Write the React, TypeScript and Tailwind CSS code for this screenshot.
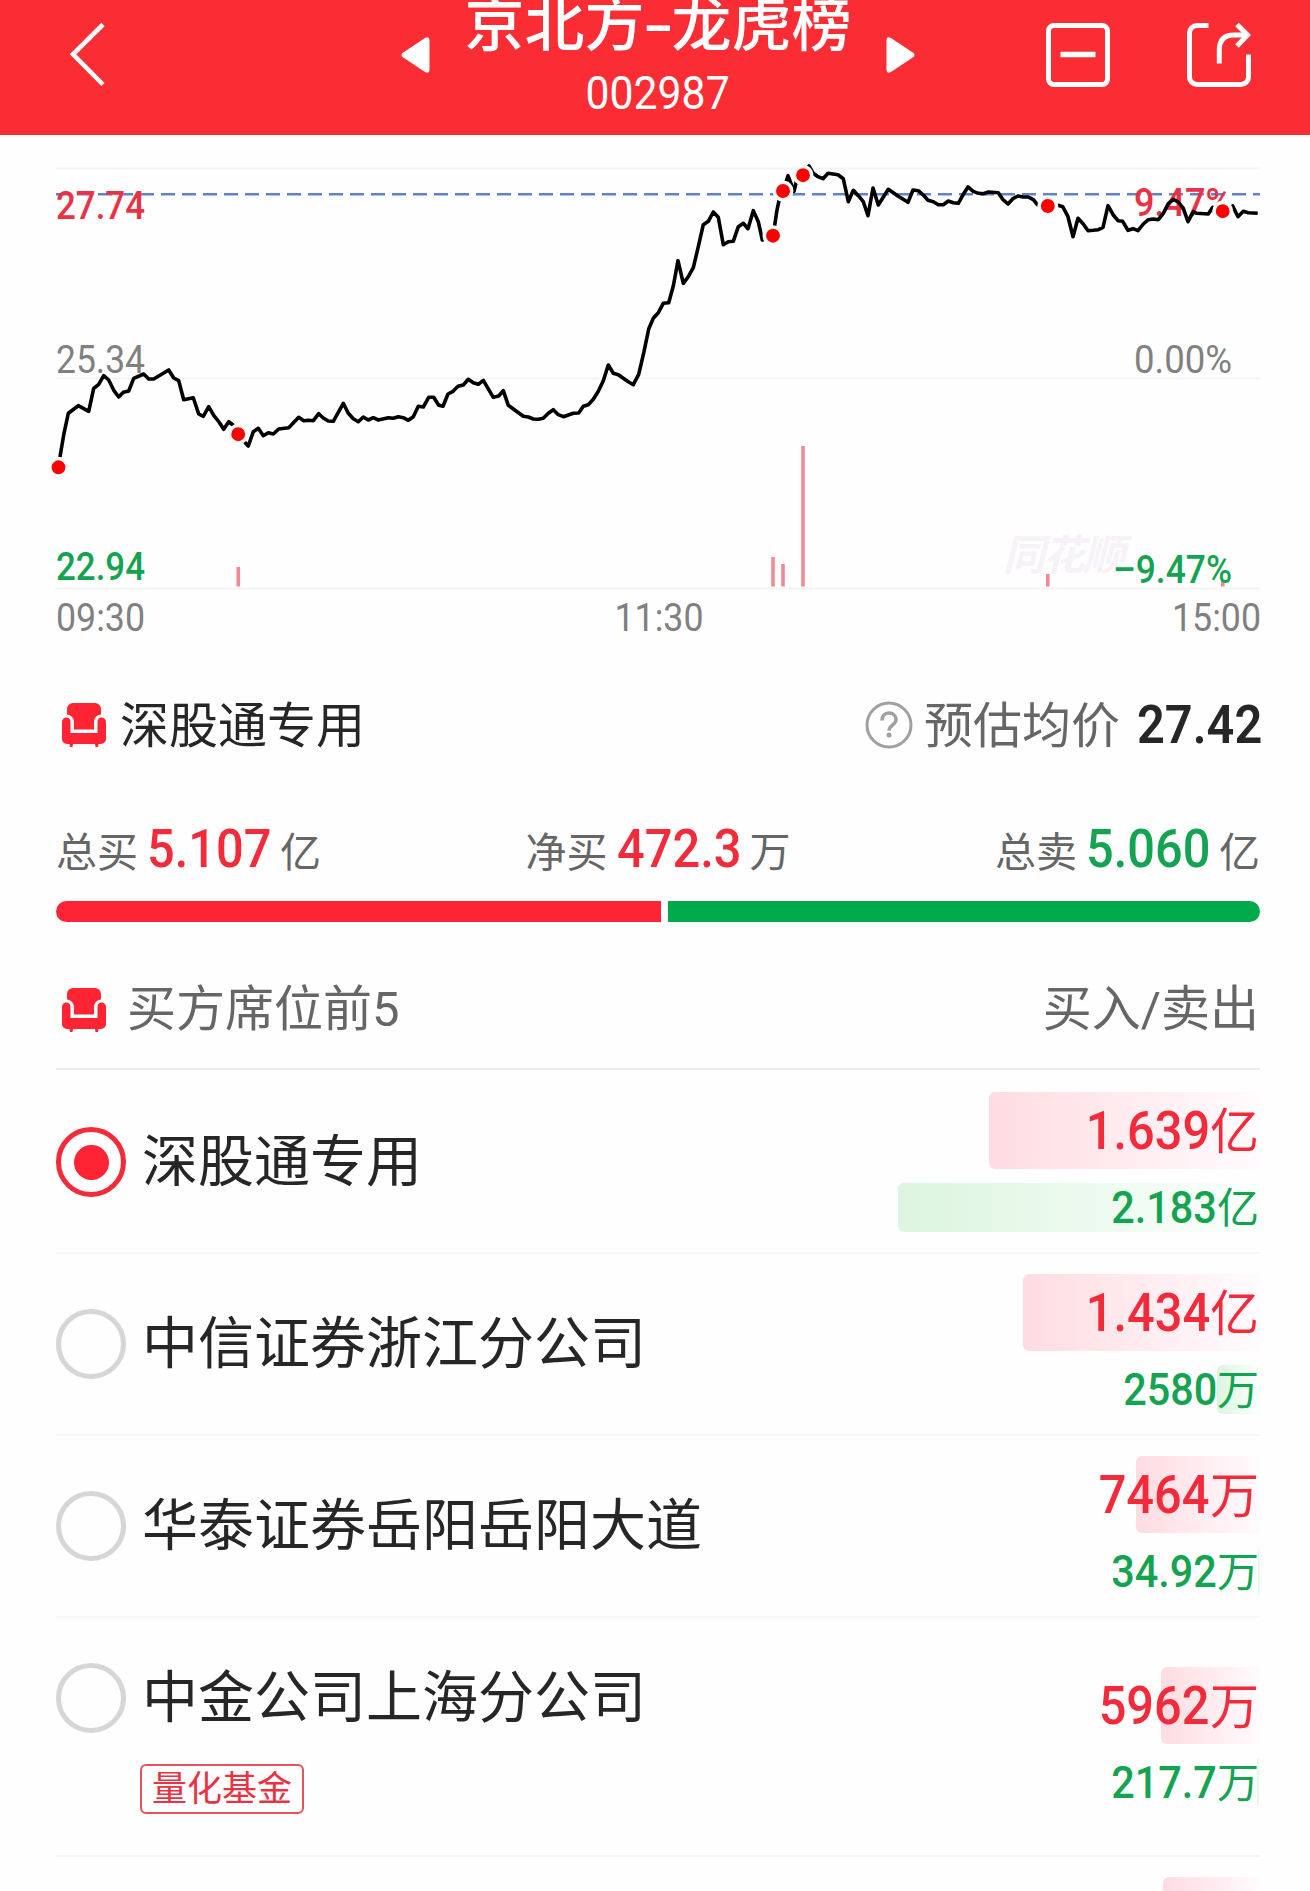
type Seat = {
  name: string;
  tag?: string;
  buy: string;
  sell: string;
  buyWidth: number;
  sellWidth: number;
  active?: boolean;
};

const seats: Seat[] = [
  { name: "深股通专用", buy: "1.639亿", sell: "2.183亿", buyWidth: 271, sellWidth: 362, active: true },
  { name: "中信证券浙江分公司", buy: "1.434亿", sell: "2580万", buyWidth: 237, sellWidth: 43 },
  { name: "华泰证券岳阳岳阳大道", buy: "7464万", sell: "34.92万", buyWidth: 124, sellWidth: 2 },
  { name: "中金公司上海分公司", tag: "量化基金", buy: "5962万", sell: "217.7万", buyWidth: 99, sellWidth: 3 },
];

// one intraday tick every 5px, stored in thirds of a pixel
const ticks = [
  "55,952 60,920 72,850 85,790 115,767 146,784 161,715 176,703 191,677 206,690 222,722 236,741 250,727 266,723 281,685",
  "311,672 326,687 341,687 360,676 386,660 401,684 416,692 431,749 460,743 476,792 490,799 506,770 521,796 537,816",
  "551,838 566,815 578,824 594,852 616,878 625,888 640,845 655,835 670,857 685,848 700,852 716,837 746,833 776,802",
  "791,812 806,811 820,812 836,791 850,804 865,813 880,814 910,760 925,790 940,806 955,815 970,801 985,810 1000,803",
  "1015,810 1045,803 1060,805 1075,800 1090,803 1105,811 1120,800 1135,769 1150,771 1166,742 1181,742 1196,766",
  "1209,769 1224,732 1239,724 1254,709 1270,705 1285,688 1300,698 1315,703 1330,691 1360,742 1376,738 1390,722",
  "1405,766 1420,777 1450,799 1465,801 1480,807 1495,808 1510,805 1525,790 1540,779 1555,794 1570,800 1600,790",
  "1616,789 1630,769 1645,764 1660,748 1675,724 1690,692 1705,645 1720,670 1735,674 1765,695 1780,704 1796,673",
  "1812,605 1826,537 1840,505 1855,488 1870,460 1886,458 1900,408 1914,332 1930,400 1945,380 1960,353 1975,290",
  "1990,224 2005,214 2020,186 2035,202 2050,284 2065,275 2080,274 2095,230 2110,220 2124,236 2140,182 2155,215",
  "2167,270 2199,257 2204,226 2210,185 2217,152 2229,123 2244,77 2262,124 2270,90 2289,75 2307,48 2320,70 2332,79 2349,86",
  "2364,70 2394,74 2410,86 2425,155 2440,121 2455,137 2470,155 2484,197 2499,114 2515,165 2545,118 2575,139 2604,157",
  "2619,120 2635,122 2650,135 2664,151 2680,155 2695,164 2710,164 2725,153 2740,158 2755,160 2770,133 2784,111",
  "2800,124 2815,130 2830,131 2845,126 2875,128 2888,148 2904,162 2920,145 2934,138 2950,141 2965,141 2980,149",
  "2992,164 3024,168 3055,166 3068,170 3084,200 3099,260 3114,205 3130,222 3144,242 3160,241 3175,239 3189,232",
  "3204,167 3220,195 3234,212 3248,214 3264,241 3279,236 3294,242 3310,222 3325,209 3340,207 3355,209 3370,190",
  "3385,161 3400,148 3415,156 3430,175 3444,215 3460,185 3470,190 3505,192 3518,172 3548,184 3578,168 3594,200",
  "3610,184 3625,188 3653,190",
].join(" ");

const price = ticks
  .split(" ")
  .map((t) => t.split(",").map(Number))
  .map(([x, y]) => `${(x / 3 + 40).toFixed(1)},${(y / 3 + 15).toFixed(1)}`)
  .join(" ");

const marks = [
  [58.5, 332.3],
  [238.2, 299.2],
  [773, 100.7],
  [783, 56],
  [803, 40.2],
  [1047.8, 71],
  [1222.7, 76.2],
];

const volumes = [
  [238.3, 432],
  [773, 422],
  [783, 429],
  [803, 311],
  [1047.8, 439],
  [1222.8, 445],
];

function Header() {
  return (
    <header className="flex h-[135px] items-start bg-[#f92d33] text-white">
      <svg viewBox="0 0 40 66" className="mt-[21px] ml-[68px] h-[66px] w-10" fill="none">
        <path d="M35 3.500 5 33.300 35 63.500" stroke="currentColor" strokeWidth="4.600" />
      </svg>
      <div className="ml-[293px] flex items-start">
        <svg viewBox="0 0 29 36" className="mt-[37px] h-9 w-[29px]" fill="currentColor">
          <path d="M24 1 1.500 16Q-.5 18 1.500 20L24 35q4.500 2 4.500-2V3q0-4-4.500-2z" />
        </svg>
        <div className="flex w-[456px] flex-col items-center">
          <h1 className="-mt-[16px] text-[60px] leading-[84px] font-medium whitespace-nowrap">
            京北方<span className="mx-[2px] inline-block w-[23px] scale-x-150 text-center">-</span>龙虎榜
          </h1>
          <p className="mt-[2px] scale-x-[0.93] text-[46px] leading-[46px]">002987</p>
        </div>
        <svg viewBox="0 0 29 36" className="mt-[37px] h-9 w-[29px]" fill="currentColor">
          <path d="M5 1 27.500 16q2 2 0 4L5 35q-4.500 2-4.500-2V3q0-4 4.500-2z" />
        </svg>
      </div>
      <div className="mt-[23px] mr-[59px] ml-auto flex gap-[77px]">
        <svg viewBox="0 0 64 64" className="size-16" fill="none" stroke="currentColor" strokeWidth="5">
          <rect x="2.500" y="2.500" width="59" height="59" rx="5.500" />
          <path d="M14.500 31.500h35" strokeWidth="5.500" />
        </svg>
        <svg viewBox="0 0 64 64" className="size-16" fill="none" stroke="currentColor" strokeWidth="5">
          <path d="M21.500 2.500H10A7.500 7.500 0 0 0 2.500 10v44a7.500 7.500 0 0 0 7.500 7.500h44a7.500 7.500 0 0 0 7.500-7.500V31.500" />
          <path d="M32.300 40.500V27Q32.300 12 47 12h13" />
          <path d="M50 1.500 60.500 12 50 23" />
        </svg>
      </div>
    </header>
  );
}

function Label({ x, y, width, children }: { x: number; y: number; width: number; children: string }) {
  return (
    <text x={x} y={y} textLength={width} lengthAdjust="spacingAndGlyphs">
      {children}
    </text>
  );
}

function Chart() {
  return (
    <svg viewBox="0 0 1310 515" className="block h-[515px] w-full text-[38px]">
      <path d="M56 33.500h1204M56 243.500h1204M56 453.500h1204" stroke="#f3f3f3" strokeWidth="2" />
      <text x="1003" y="435" fontSize="42" fontWeight="700" fontStyle="italic" fill="#f6f2f7" textLength="122">
        同花顺
      </text>
      {volumes.map(([x, y]) => (
        <path key={x} d={`M${x} ${y}V451.500`} stroke="#f08b94" strokeWidth="3.600" />
      ))}
      <path d="M56 59.300h1204" stroke="#5f82d2" strokeWidth="2.400" strokeDasharray="14 7" />
      <g fill="#e93244" fontWeight="500">
        <Label x={56} y={83.5} width={89}>27.74</Label>
        <Label x={1134} y={80.5} width={98}>9.47%</Label>
      </g>
      <g fill="#808080">
        <Label x={56} y={237.5} width={89}>25.34</Label>
        <Label x={1134} y={238} width={98}>0.00%</Label>
        <Label x={56} y={496} width={89}>09:30</Label>
        <Label x={614.5} y={496} width={89}>11:30</Label>
        <Label x={1172} y={496} width={89}>15:00</Label>
      </g>
      <g fill="#14a351" fontWeight="500">
        <Label x={56} y={444.5} width={89}>22.94</Label>
        <Label x={1113} y={448} width={119}>–9.47%</Label>
      </g>
      <polyline points={price} fill="none" stroke="#000" strokeWidth="3.600" strokeLinejoin="round" />
      {marks.map(([x, y]) => (
        <circle key={x} cx={x} cy={y} r="8.700" fill="#f00" stroke="#fefefe" strokeWidth="3.500" />
      ))}
    </svg>
  );
}

function SeatIcon() {
  return (
    <svg viewBox="0 0 44 44" className="ml-[6px] size-11 shrink-0" fill="#ff2433">
      <path d="M11 0h22a6 6 0 0 1 6 6v5.500c-4 .5-7 3.500-7 7.500v7.500H12V19c0-4-3-7-7-7.500V6a6 6 0 0 1 6-6z" />
      <path d="M0 19a4.500 4.500 0 0 1 4.500-4.500c2.500 0 4 2 4 4.500v11h27V19c0-2.500 1.500-4.500 4-4.500A4.500 4.500 0 0 1 44 19v17a5 5 0 0 1-5 5h-2.500l-.5 3h-2.500l-.5-3h-22l-.5 3H8l-.5-3H5a5 5 0 0 1-5-5z" />
    </svg>
  );
}

function Stat({ label, value, unit, color }: { label: string; value: string; unit: string; color: string }) {
  return (
    <div className="flex items-baseline text-[41px] leading-[60px] text-[#666]">
      {label}
      <span className={`mx-[9px] w-[124px] origin-left scale-x-[0.92] text-[53px] font-medium ${color}`}>{value}</span>
      {unit}
    </div>
  );
}

function SeatRow({ seat }: { seat: Seat }) {
  return (
    <li className={`flex items-center border-b-2 border-[#f6f6f6] ${seat.tag ? "h-[239px]" : "h-[182px]"}`}>
      {seat.tag ? (
        <div className="flex-1 pt-[3px]">
          <div className="flex items-center">
            <Radio />
            <span className="ml-[16px] text-[56px] leading-[72px]">{seat.name}</span>
          </div>
          <span className="mt-[30px] ml-[84px] flex h-[50px] w-[164px] items-center justify-center rounded-md border-2 border-[#e8505c] text-[35px] leading-none text-[#e93244]">
            {seat.tag}
          </span>
        </div>
      ) : (
        <div className="flex flex-1 items-center">
          <Radio active={seat.active} />
          <span className="ml-[16px] text-[56px] leading-[72px]">{seat.name}</span>
        </div>
      )}
      <div className="flex flex-col items-end gap-[14px] font-medium whitespace-nowrap">
        <div className="relative h-[77px]">
          <div
            className="absolute top-0 right-0 h-full rounded-l-md bg-linear-to-r from-[#ffdce1] to-[#fffbfe]"
            style={{ width: seat.buyWidth }}
          />
          <Amount value={seat.buy} className="text-[53px] leading-[79px] text-[#f22a3a]" unit="text-[49px]" />
        </div>
        <div className="relative h-[49px]">
          <div
            className="absolute top-0 right-0 h-full rounded-l-md bg-linear-to-r from-[#dcf5df] to-[#fbfffc]"
            style={{ width: seat.sellWidth }}
          />
          <Amount value={seat.sell} className="text-[45px] leading-[49px] text-[#14a351]" unit="text-[42px]" />
        </div>
      </div>
    </li>
  );
}

function Amount({ value, className, unit }: { value: string; className: string; unit: string }) {
  return (
    <div className={`relative flex items-baseline pr-px ${className}`}>
      <span className="origin-right scale-x-[0.92]">{value.slice(0, -1)}</span>
      <span className={`font-normal ${unit}`}>{value.slice(-1)}</span>
    </div>
  );
}

function Radio({ active }: { active?: boolean }) {
  return active ? (
    <span className="flex size-[70px] shrink-0 items-center justify-center rounded-full border-[5px] border-[#f22a3a]">
      <span className="size-[35px] rounded-full bg-[#ff2433]" />
    </span>
  ) : (
    <span className="size-[70px] shrink-0 rounded-full border-[5px] border-[#d6d5d7]" />
  );
}

export default function App() {
  return (
    <div className="h-[1891px] w-[1310px] overflow-hidden bg-[#fefefe] font-['Roboto','Noto_Sans_CJK_SC',sans-serif] text-[#262626]">
      <Header />
      <Chart />
      <main className="pr-[50px] pl-[56px]">
        <section className="flex h-[150px] items-center text-[49px]">
          <SeatIcon />
          <span className="ml-[14px] pt-[3px]">深股通专用</span>
          <svg viewBox="0 0 48 48" className="ml-auto size-12" fill="none" stroke="#a0a0a0" strokeWidth="3">
            <circle cx="24" cy="24" r="22" />
            <path d="M17 19.500c0-4.500 3-7.500 7-7.500s7 2.800 7 6.800c0 5-7 5.200-7 11" strokeWidth="3.500" />
            <circle cx="24" cy="34" r="2.500" fill="#a0a0a0" stroke="none" />
          </svg>
          <span className="ml-[11px] pt-[3px] text-[#666]">预估均价</span>
          <span className="ml-[17px] w-[123px] origin-left scale-x-[0.92] pt-[2px] text-[53px] font-semibold">27.42</span>
        </section>
        <section className="flex h-[101px] items-center justify-between">
          <Stat label="总买" value="5.107" unit="亿" color="text-[#f22a3a]" />
          <Stat label="净买" value="472.3" unit="万" color="text-[#f22a3a]" />
          <Stat label="总卖" value="5.060" unit="亿" color="text-[#14a351]" />
        </section>
        <div className="flex h-[21px] gap-[7px]">
          <div className="w-[605px] rounded-l-full bg-[#ff2433]" />
          <div className="flex-1 rounded-r-full bg-[#00a94a]" />
        </div>
        <section className="flex h-[148px] items-center border-b-2 border-[#ebebeb] pt-[29px] text-[49px] text-[#666]">
          <SeatIcon />
          <span className="ml-[21px]">买方席位前5</span>
          <span className="mr-[1px] ml-auto">买入/卖出</span>
        </section>
        <ul className="pt-[2px]">
          {seats.map((seat) => (
            <SeatRow key={seat.name} seat={seat} />
          ))}
          <li className="flex justify-end pt-[20px]">
            <div className="h-[77px] w-[97px] rounded-l-md bg-linear-to-r from-[#ffdce1] to-[#fffbfe]" />
          </li>
        </ul>
      </main>
    </div>
  );
}
